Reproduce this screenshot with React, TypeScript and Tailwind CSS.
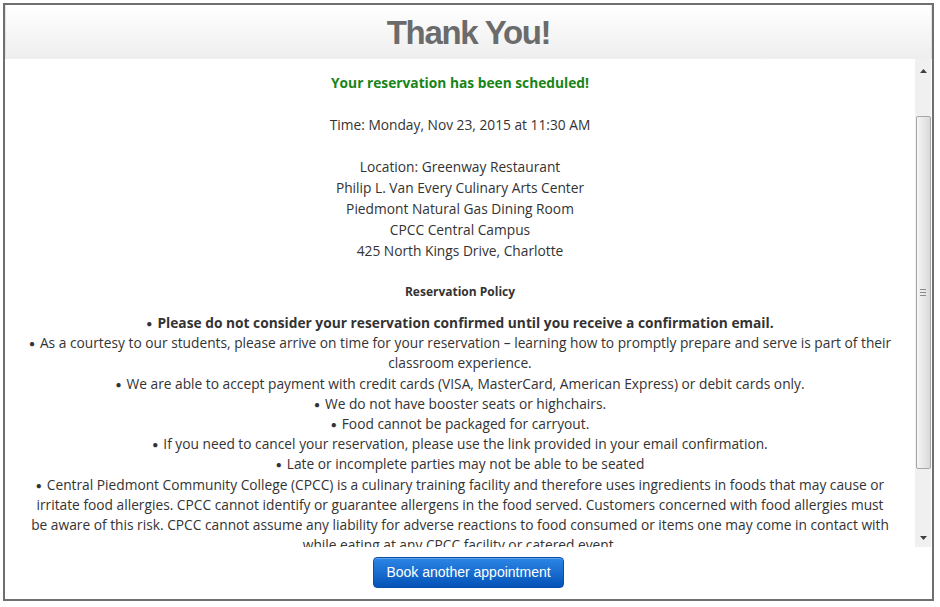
import React from 'react';

const policies: { text: string; bold?: boolean }[] = [
  { text: 'Please do not consider your reservation confirmed until you receive a confirmation email.', bold: true },
  { text: 'As a courtesy to our students, please arrive on time for your reservation – learning how to promptly prepare and serve is part of their classroom experience.' },
  { text: 'We are able to accept payment with credit cards (VISA, MasterCard, American Express) or debit cards only.' },
  { text: 'We do not have booster seats or highchairs.' },
  { text: 'Food cannot be packaged for carryout.' },
  { text: 'If you need to cancel your reservation, please use the link provided in your email confirmation.' },
  { text: 'Late or incomplete parties may not be able to be seated' },
  {
    text: 'Central Piedmont Community College (CPCC) is a culinary training facility and therefore uses ingredients in foods that may cause or irritate food allergies. CPCC cannot identify or guarantee allergens in the food served. Customers concerned with food allergies must be aware of this risk. CPCC cannot assume any liability for adverse reactions to food consumed or items one may come in contact with while eating at any CPCC facility or catered event.',
  },
];

const location = [
  'Location: Greenway Restaurant',
  'Philip L. Van Every Culinary Arts Center',
  'Piedmont Natural Gas Dining Room',
  'CPCC Central Campus',
  '425 North Kings Drive, Charlotte',
];

const ScrollBar: React.FC = () => (
  <div className="w-[16px] mr-[1px] bg-[#f0f0f0] flex flex-col items-center">
    <div className="h-[17px] w-full flex items-end justify-center pb-[3px]">
      <svg width="7" height="4" viewBox="0 0 7 4">
        <path d="M3.5 0 L7 4 L0 4 Z" fill="#404040" />
      </svg>
    </div>
    <div className="h-[40px]" />
    <div className="w-[15px] h-[353px] rounded-[2px] border border-[#a7a7a7] bg-gradient-to-r from-[#f5f5f5] to-[#dadada] flex flex-col items-center justify-center gap-[2px]">
      <div className="w-[6px] h-px bg-[#8a8a8a]" />
      <div className="w-[6px] h-px bg-[#8a8a8a]" />
      <div className="w-[6px] h-px bg-[#8a8a8a]" />
    </div>
    <div className="flex-1" />
    <div className="h-[17px] w-full flex items-start justify-center pt-[6px]">
      <svg width="7" height="4" viewBox="0 0 7 4">
        <path d="M0 0 L7 0 L3.5 4 Z" fill="#404040" />
      </svg>
    </div>
  </div>
);

const App: React.FC = () => {
  return (
    <div className="w-[940px] h-[607px] bg-white pt-[3px] pl-[3px]">
      <div className="w-[931px] h-[598px] border-2 border-[#6f6f6f] flex flex-col bg-white">
        <header className="h-[54px] shrink-0 bg-gradient-to-b from-white to-[#eeeeee] border-x border-[#e2e2e2] flex items-center justify-center">
          <h1 className="text-[33px] font-bold tracking-[-1.3px] text-[#6b6b6b] font-['Liberation_Sans',Arial,sans-serif] mt-[2px]">
            Thank You!
          </h1>
        </header>

        <div className="h-[488px] shrink-0 flex">
          <div className="flex-1 overflow-hidden px-[23px] pt-[13px] text-center text-[13.75px] text-[#333333] font-['Open_Sans','Noto_Sans',sans-serif]">
            <p className="leading-[21px] font-bold text-[#178417]">Your reservation has been scheduled!</p>
            <p className="leading-[21px] mt-[21px]">Time: Monday, Nov 23, 2015 at 11:30 AM</p>
            <div className="mt-[21px] leading-[21px]">
              {location.map((line) => (
                <p key={line}>{line}</p>
              ))}
            </div>
            <p className="mt-[21px] leading-[20px] text-[12px] font-bold">Reservation Policy</p>
            <ul className="mt-[11px] leading-[20.2px]">
              {policies.map((p, i) => (
                <li key={i} className={p.bold ? 'font-bold' : ''}>
                  <span className="text-[10px] mr-[5px] align-[1px]">●</span>
                  {p.text}
                </li>
              ))}
            </ul>
          </div>
          <ScrollBar />
        </div>

        <div className="flex-1 flex justify-center pt-[10px]">
          <button className="h-[31px] w-[191px] rounded-[4px] border border-[#0b4ea8] bg-gradient-to-b from-[#2b86e6] to-[#0553b8] text-white text-[14px] font-['Liberation_Sans',Arial,sans-serif] shadow-[inset_0_1px_0_rgba(255,255,255,0.25)]">
            Book another appointment
          </button>
        </div>
      </div>
    </div>
  );
};

export default App;
